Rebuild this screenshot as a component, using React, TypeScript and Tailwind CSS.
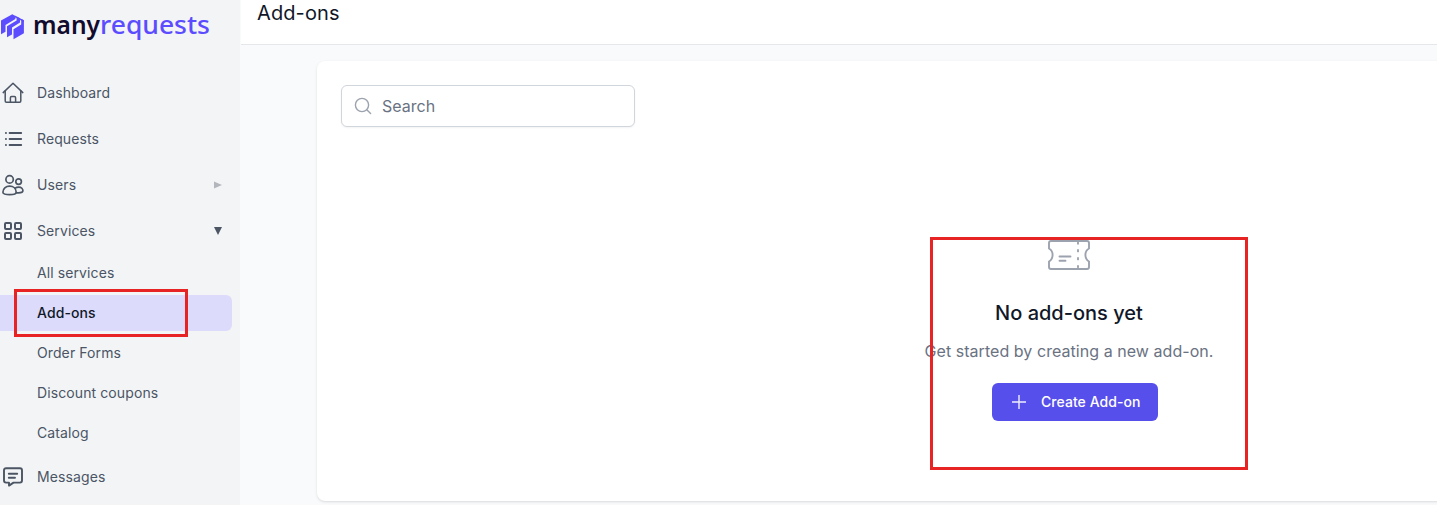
import type { ReactNode } from "react";

const subItems = ["All services", "Add-ons", "Order Forms", "Discount coupons", "Catalog"];

function Logo() {
  return (
    <div className="flex h-[70px] items-start">
      <svg width="240" height="50" viewBox="0 0 240 50">
        <g fill="#5b4dff">
          <path d="M1 20.4 12.3 14.2 15.4 15.9V19L5.5 25V31.8L1 34.2Z" />
          <path d="M7 26.2 16.6 20.4V16.5L20 18.3V22.6L12 27.4V34.6L7 37.3Z" />
          <path d="M13.5 29.2 21.2 24.4V18.9L23.9 20.3V33.2L13.5 39.3Z" />
          <path d="M14.8 15.5 23.9 20.3V22L14.8 17.2Z" />
        </g>
        <text x="33" y="34" fontFamily="Noto Sans, sans-serif" fontSize="25" fontWeight="600" fill="#110b2e" textLength="67" lengthAdjust="spacingAndGlyphs">
          many
        </text>
        <text x="100" y="34" fontFamily="Noto Sans, sans-serif" fontSize="25" fontWeight="500" fill="#5b4dff" textLength="110" lengthAdjust="spacingAndGlyphs">
          requests
        </text>
      </svg>
    </div>
  );
}

function NavIcon({ children, width = 1.6 }: { children: ReactNode; width?: number }) {
  return (
    <svg
      className="h-[26px] w-[26px] shrink-0"
      viewBox="0 0 26 26"
      fill="none"
      stroke="#4b5563"
      strokeWidth={width}
      strokeLinecap="round"
      strokeLinejoin="round"
    >
      {children}
    </svg>
  );
}

function NavItem({ icon, label, arrow }: { icon: ReactNode; label: string; arrow?: ReactNode }) {
  return (
    <a className="flex h-[46px] items-center">
      {icon}
      <span className="ml-[11px] flex-1 text-sm tracking-[0.1px] text-gray-600">{label}</span>
      {arrow}
    </a>
  );
}

function Sidebar() {
  return (
    <aside className="h-full w-60 shrink-0 overflow-hidden bg-gray-100">
      <Logo />
      <nav>
        <NavItem
          label="Dashboard"
          icon={
            <NavIcon width={1.5}>
              <path d="M3.2 12.6 13 3.2l9.8 9.4" />
              <path d="M5.2 11v10a1.2 1.2 0 0 0 1.2 1.2h13.2a1.2 1.2 0 0 0 1.2-1.2V11" />
              <path d="M10.4 22v-4.2a1.2 1.2 0 0 1 1.2-1.2h2.8a1.2 1.2 0 0 1 1.2 1.2V22" />
            </NavIcon>
          }
        />
        <NavItem
          label="Requests"
          icon={
            <NavIcon width={1.9}>
              <path d="M9.6 7H21.2M9.6 13H21.2M9.6 19H21.2" />
              <path d="M5.9 7h.1M5.9 13h.1M5.9 19h.1" />
            </NavIcon>
          }
        />
        <NavItem
          label="Users"
          icon={
            <NavIcon width={1.7}>
              <circle cx="9.6" cy="7.4" r="3.7" />
              <circle cx="18.6" cy="9.6" r="2.8" />
              <path d="M2.9 20.2C2.9 16.6 5.8 14.2 9.6 14.2s6.6 2.4 6.6 6c0 1.4-2.4 2.4-6.6 2.4s-6.7-1-6.7-2.4Z" />
              <path d="M15.2 16.2c.9-.7 2.1-1.1 3.6-1.1 2.7 0 4.1 1.9 4.1 3.7 0 1.1-1.9 2-4.3 2h-2.2" />
            </NavIcon>
          }
          arrow={
            <svg className="mr-[18px] h-2 w-2" viewBox="0 0 8 8">
              <path d="M0 .6 8 4 0 7.4Z" fill="#b3b6bc" />
            </svg>
          }
        />
        <NavItem
          label="Services"
          icon={
            <NavIcon width={2}>
              <rect x="5" y="5" width="6" height="6" rx="1" />
              <rect x="15" y="5" width="6" height="6" rx="1" />
              <rect x="5" y="15" width="6" height="6" rx="1" />
              <rect x="15" y="15" width="6" height="6" rx="1" />
            </NavIcon>
          }
          arrow={
            <svg className="mr-[18px] h-2 w-2" viewBox="0 0 8 8">
              <path d="M0 0H8L4 8Z" fill="#4b5563" />
            </svg>
          }
        />
        <div className="flex flex-col gap-1 py-px">
          {subItems.map((item) => (
            <a
              key={item}
              className={
                item === "Add-ons"
                  ? "mr-2 flex h-9 items-center rounded-r-md bg-[#dddbfb] pl-[37px] text-sm font-medium tracking-[0.1px] text-gray-900"
                  : "mr-2 flex h-9 items-center pl-[37px] text-sm tracking-[0.1px] text-gray-600"
              }
            >
              {item}
            </a>
          ))}
        </div>
        <div className="mt-0.5">
          <NavItem
            label="Messages"
            icon={
              <NavIcon width={1.9}>
                <path d="M6 4.2h14a2 2 0 0 1 2 2v10.4a2 2 0 0 1-2 2h-6.5L9 21.6v-3H6a2 2 0 0 1-2-2V6.2a2 2 0 0 1 2-2Z" />
                <path d="M8.8 9.8h8.4M8.8 13.8h6.2" />
              </NavIcon>
            }
          />
        </div>
      </nav>
    </aside>
  );
}

function EmptyState() {
  return (
    <div className="mt-[111px] flex flex-col items-center">
      <svg width="44" height="34" viewBox="0 0 44 34" fill="none" stroke="#9ca3af" strokeWidth="1.9" strokeLinecap="round" strokeLinejoin="round">
        <path d="M4 3H40a2 2 0 0 1 2 2v5.5c-2.3 1.3-3.6 3.7-3.6 6.5s1.3 5.2 3.6 6.5v5.5a2 2 0 0 1-2 2H4a2 2 0 0 1-2-2v-5.5c2.3-1.3 3.6-3.7 3.6-6.5S4.3 11.8 2 10.5V5a2 2 0 0 1 2-2Z" />
        <path d="M12.5 18.5H23.5M12.5 22.8H18.5" />
        <path d="M31 4.5v1.2M31 12v1.4M31 20v1.4M31 28v1.2" />
      </svg>
      <h3 className="mt-[27px] text-xl font-medium text-gray-900">No add-ons yet</h3>
      <p className="mt-3 tracking-[0.05px] text-gray-500">Get started by creating a new add-on.</p>
      <button className="mt-5 ml-3 flex h-[38px] w-[166px] items-center rounded-md bg-[#574feb] pl-5 text-sm font-medium text-white">
        <svg className="mr-[15px]" width="14" height="14" viewBox="0 0 14 14" stroke="#fff" strokeOpacity="0.9" strokeWidth="1.4">
          <path d="M7 0V14M0 7H14" />
        </svg>
        <span className="tracking-[0.05px]">Create Add-on</span>
      </button>
    </div>
  );
}

export default function App() {
  return (
    <div className="relative flex h-[505px] w-full overflow-hidden bg-gray-50 font-['Inter',sans-serif]">
      <Sidebar />
      <main className="min-w-0 flex-1 overflow-hidden">
        <header className="ml-px flex h-[45px] border-b border-gray-200 bg-white pl-4">
          <h1 className="-mt-px h-7 text-xl tracking-[0.1px] text-gray-900">Add-ons</h1>
        </header>
        <section className="mt-4 ml-[77px] h-[440px] w-[1504px] rounded-lg bg-white p-6 shadow-sm">
          <div className="flex h-[42px] w-[294px] items-center rounded-md border border-gray-300 bg-white pl-3 shadow-xs">
            <svg width="18" height="18" viewBox="0 0 18 18" fill="none" stroke="#9ca3af" strokeWidth="1.4" strokeLinecap="round">
              <circle cx="8" cy="8" r="6.6" />
              <path d="M13 13 16.6 16.6" />
            </svg>
            <span className="ml-2.5 text-gray-500">Search</span>
          </div>
          <EmptyState />
        </section>
      </main>
      <div className="pointer-events-none absolute top-[289px] left-[14px] h-12 w-[174px] border-3 border-[#e82323]" />
      <div className="pointer-events-none absolute top-[237px] left-[930px] h-[233px] w-[318px] border-3 border-[#e82323]" />
    </div>
  );
}
